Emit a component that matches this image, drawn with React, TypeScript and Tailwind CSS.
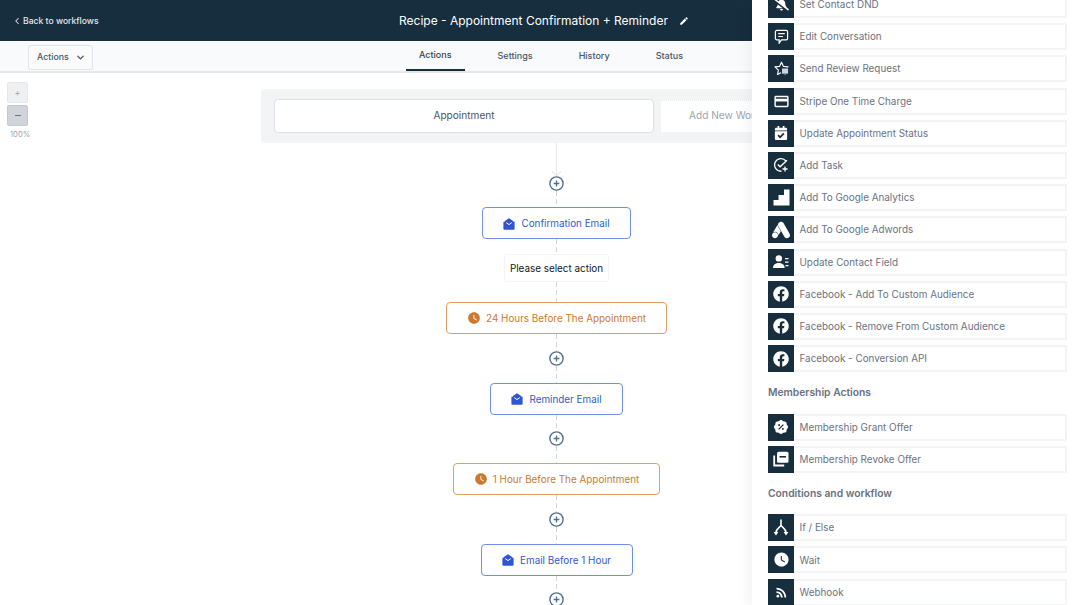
import React from "react";
import { FaBellSlash, FaCalendarCheck, FaFacebook } from "react-icons/fa";
import { MdEdit, MdRssFeed, MdWatchLater, MdOutlineCreditCard } from "react-icons/md";
import { SiGoogleads } from "react-icons/si";
import { RiDiscountPercentFill } from "react-icons/ri";
import { ChevronDown, ChevronLeft } from "lucide-react";

const EditConv = () => (
  <svg width="15" height="15" viewBox="0 0 16 16" fill="none" stroke="white" strokeWidth="1.3">
    <path d="M3 1.5h10a1.5 1.5 0 0 1 1.5 1.5v7A1.5 1.5 0 0 1 13 11.5H8L5.5 15V11.5H3A1.5 1.5 0 0 1 1.5 10V3A1.5 1.5 0 0 1 3 1.5z" />
    <path d="M4.5 5h7M4.5 8h5" />
  </svg>
);
const Review = () => (
  <svg width="15" height="15" viewBox="0 0 16 16" fill="none">
    <path d="M8 1.3l2 4.4 5 .6-3.7 3.4 1 4.8L8 12.2 3.7 14.5l1-4.8L1 6.3l5-.6z" stroke="white" strokeWidth="1.2" strokeLinejoin="round" />
    <rect x="7.5" y="7" width="8" height="7.5" fill="#172e3f" />
    <rect x="8.5" y="8" width="6.5" height="5.5" fill="#cbd5e1" />
  </svg>
);
const Task = () => (
  <svg width="16" height="16" viewBox="0 0 16 16" fill="none" stroke="white" strokeWidth="1.3">
    <path d="M13 4.2A6.3 6.3 0 1 0 8.5 14.2" />
    <path d="M4.8 7.5l2.3 2.3L14 3.2" />
    <path d="M12 9.5v5M9.5 12h5" />
  </svg>
);
const Stairs = () => (
  <svg width="17" height="17" viewBox="0 0 17 17" fill="white">
    <path d="M11 0.5h5.5v16H0.5v-5.5h5V6h5.5z" />
  </svg>
);
const ContactField = () => (
  <svg width="16" height="16" viewBox="0 0 16 16" fill="white">
    <circle cx="5.8" cy="4.4" r="3.2" />
    <path d="M0 14c0-3.6 2.8-5 5.8-5s5.8 1.4 5.8 5z" />
    <path d="M12 4h3.5v1.3H12zM12 7.5h3.5v1.3H12zM12.5 11h3v1.3h-3z" />
  </svg>
);
const Revoke = () => (
  <svg width="16" height="16" viewBox="0 0 16 16" fill="none">
    <path d="M1.2 4.5v10h10" stroke="white" strokeWidth="1.8" />
    <rect x="4" y="0.8" width="11.5" height="11" rx="1.5" fill="white" />
    <path d="M6.5 5h6.5v1.6H6.5z" fill="#172e3f" />
  </svg>
);
const Fork = () => (
  <svg width="16" height="17" viewBox="0 0 16 17" fill="none" stroke="white" strokeWidth="1.6">
    <path d="M8 0.5v5.5M8 6C8 8 3 9.5 3 13.5M8 6c0 2 5 3.5 5 7.5" />
    <path d="M0.6 13h4.8L3 16.4zM10.6 13h4.8L13 16.4z" fill="white" stroke="none" />
  </svg>
);
const Mail = () => (
  <svg width="12" height="12" viewBox="0 0 12 12" className="shrink-0">
    <path d="M6 0.3L10.2 3v2H1.8V3z" fill="#2f55d4" />
    <path d="M0.4 3.8h11.2v7a1 1 0 0 1-1 1H1.4a1 1 0 0 1-1-1z" fill="#2f55d4" />
    <path d="M3.2 4.6L6 6.6l2.8-2" stroke="white" strokeWidth="1" fill="none" />
  </svg>
);

const Plus = () => (
  <svg width="15" height="15" viewBox="0 0 15 15" fill="white" className="relative shrink-0">
    <circle cx="7.5" cy="7.5" r="6.6" stroke="#536e90" strokeWidth="1.4" />
    <path d="M7.5 4.6v5.8M4.6 7.5h5.8" stroke="#536e90" strokeWidth="1.3" />
  </svg>
);

const Dash = ({ h }: { h: string }) => (
  <div className={`${h} w-px shrink-0 bg-[repeating-linear-gradient(to_bottom,#d1d5db_0,#d1d5db_5px,transparent_5px,transparent_8px)]`} />
);

const Node = ({ w, tone, label }: { w: string; tone: "blue" | "orange"; label: string }) =>
  tone === "blue" ? (
    <div className={`${w} flex h-[32px] shrink-0 items-center justify-center gap-[6px] rounded-[4px] border border-[#6f8fe8] bg-white pt-[1px] text-[9.9px] text-[#3158d6]`}>
      <Mail />
      <span>{label}</span>
    </div>
  ) : (
    <div className={`${w} flex h-[32px] shrink-0 items-center justify-center gap-[5px] rounded-[4px] border border-[#dd9f62] bg-white pt-[1px] text-[9.9px] text-[#c97a30]`}>
      <MdWatchLater size={14} color="#cb7a30" />
      <span>{label}</span>
    </div>
  );

type Row = { icon: React.ReactNode; label: string };
const g1: Row[] = [
  { icon: <FaBellSlash size={15} color="white" />, label: "Set Contact DND" },
  { icon: <EditConv />, label: "Edit Conversation" },
  { icon: <Review />, label: "Send Review Request" },
  { icon: <MdOutlineCreditCard size={17} color="white" />, label: "Stripe One Time Charge" },
  { icon: <FaCalendarCheck size={14} color="white" />, label: "Update Appointment Status" },
  { icon: <Task />, label: "Add Task" },
  { icon: <Stairs />, label: "Add To Google Analytics" },
  { icon: <SiGoogleads size={18} color="white" />, label: "Add To Google Adwords" },
  { icon: <ContactField />, label: "Update Contact Field" },
  { icon: <FaFacebook size={16} color="white" />, label: "Facebook - Add To Custom Audience" },
  { icon: <FaFacebook size={16} color="white" />, label: "Facebook - Remove From Custom Audience" },
  { icon: <FaFacebook size={16} color="white" />, label: "Facebook - Conversion API" },
];
const g2: Row[] = [
  { icon: <RiDiscountPercentFill size={16} color="white" />, label: "Membership Grant Offer" },
  { icon: <Revoke />, label: "Membership Revoke Offer" },
];
const g3: Row[] = [
  { icon: <Fork />, label: "If / Else" },
  { icon: <MdWatchLater size={17} color="white" />, label: "Wait" },
  { icon: <MdRssFeed size={15} color="white" />, label: "Webhook" },
];

const Rows = ({ rows }: { rows: Row[] }) => (
  <div className="flex flex-col gap-[5.2px]">
    {rows.map((r) => (
      <div key={r.label} className="flex h-[27px] shrink-0">
        <div className="flex w-[26px] shrink-0 items-center justify-center bg-[#172e3f]">{r.icon}</div>
        <div className="flex flex-1 items-center border-2 border-l-0 border-[#f3f4f6] pl-[5.5px] text-[9.9px] text-[#6b7280]">
          {r.label}
        </div>
      </div>
    ))}
  </div>
);

const Heading = ({ children }: { children: React.ReactNode }) => (
  <div className="flex h-[41.5px] items-center text-[10.3px] font-semibold text-[#6b7280]">{children}</div>
);

export default function App() {
  return (
    <div className="relative flex h-[605px] w-[1082px] flex-col overflow-hidden bg-white font-[Inter,sans-serif]">
      <header className="relative flex h-[41px] shrink-0 items-center justify-center bg-[#172e3f] pl-[6px] text-white">
        <div className="absolute left-[12px] flex items-center gap-[1px] pt-[1px] text-[8.6px] font-medium text-[#e5e7eb]">
          <ChevronLeft size={10} strokeWidth={2.5} />
          <span>Back to workflows</span>
        </div>
        <div className="flex items-center gap-[11px]">
          <span className="text-[12px]">Recipe - Appointment Confirmation + Reminder</span>
          <MdEdit size={10} />
        </div>
      </header>

      <div className="relative flex h-[32px] shrink-0 justify-center border-b-2 border-[#e5e7eb] bg-[#f9fafb]">
        <button className="absolute left-[28px] top-[3.5px] flex h-[25px] w-[65px] items-center gap-[6px] rounded-[3px] border border-[#e0e3e8] bg-[#fbfbfc] pl-[8px] text-[8.8px] font-medium text-[#4b5563]">
          Actions
          <ChevronDown size={11} strokeWidth={3} />
        </button>
        <nav className="flex h-[31px] w-[312px] items-stretch gap-[46px] border-b border-[#e5e7eb] pl-[34px] text-[9px] font-medium text-[#4b5563]">
          <a className="-mx-[13.5px] flex items-center border-b-[2px] border-[#172e3f] px-[13.5px] text-[#374151]">Actions</a>
          <a className="flex items-center">Settings</a>
          <a className="flex items-center">History</a>
          <a className="flex items-center">Status</a>
        </nav>
      </div>

      <div className="flex min-h-0 flex-1">
        <div className="flex w-[31px] shrink-0 flex-col items-start pl-[7px] pt-[9px]">
          <div className="flex h-[21px] w-[21px] items-center justify-center rounded-[2px] border border-[#e5e7eb] bg-[#eff0f2] text-[9px] text-[#9ca3af]">+</div>
          <div className="mt-[2px] flex h-[21px] w-[21px] items-center justify-center rounded-[2px] border border-[#c3c8d0] bg-[#d1d5db]">
            <div className="h-[1.5px] w-[6px] bg-[#6b7280]" />
          </div>
          <div className="mt-[3px] pl-[3px] text-[7.6px] text-[#9ca3af]">100%</div>
        </div>

        <div className="flex min-w-0 flex-1 flex-col items-center pt-[16px]">
          <div className="flex h-[54px] w-[591px] shrink-0 items-center gap-[6px] rounded-[4px] bg-[#f3f4f6] pl-[13px]">
            <div className="flex h-[34px] w-[380px] items-center justify-center rounded-[4px] border border-[#dcdfe4] bg-white text-[10.1px] text-[#4b5563]">Appointment</div>
            <div className="flex h-[33px] w-[150px] items-center justify-center rounded-[2px] border border-dotted border-[#e5e7eb] bg-white text-[10.1px] text-[#9ca3af]">Add New Workflow</div>
          </div>
          <div className="relative h-[32.5px] shrink-0 border-l border-[#e5e7eb]">
            <div className="absolute -left-[4px] bottom-[1px] h-[7px] w-[7px] rotate-45 border-b border-r border-[#e5e7eb]" />
          </div>
          <Plus />
          <Dash h="h-[16.5px]" />
          <Node w="w-[149px]" tone="blue" label="Confirmation Email" />
          <Dash h="h-[15px]" />
          <div className="flex h-[28px] w-[105px] shrink-0 items-center justify-center rounded-[3px] border border-[#f3f4f6] bg-white pt-[1px] text-[9.9px] text-[#111827]">Please select action</div>
          <Dash h="h-[19.5px]" />
          <Node w="w-[221px]" tone="orange" label="24 Hours Before The Appointment" />
          <Dash h="h-[17px]" />
          <Plus />
          <Dash h="h-[17px]" />
          <Node w="w-[133px]" tone="blue" label="Reminder Email" />
          <Dash h="h-[16px]" />
          <Plus />
          <Dash h="h-[17px]" />
          <Node w="w-[207px]" tone="orange" label="1 Hour Before The Appointment" />
          <Dash h="h-[17px]" />
          <Plus />
          <Dash h="h-[17px]" />
          <Node w="w-[152px]" tone="blue" label="Email Before 1 Hour" />
          <Dash h="h-[16px]" />
          <Plus />
        </div>
      </div>

      <aside className="absolute bottom-0 right-0 top-0 flex w-[330px] flex-col overflow-hidden bg-white pl-[16px] pr-[15px] shadow-[-6px_0_10px_rgba(0,0,0,0.04)]">
        <div className="-mt-[9px]">
          <Rows rows={g1} />
          <Heading>Membership Actions</Heading>
          <Rows rows={g2} />
          <Heading>Conditions and workflow</Heading>
          <Rows rows={g3} />
        </div>
      </aside>
    </div>
  );
}
